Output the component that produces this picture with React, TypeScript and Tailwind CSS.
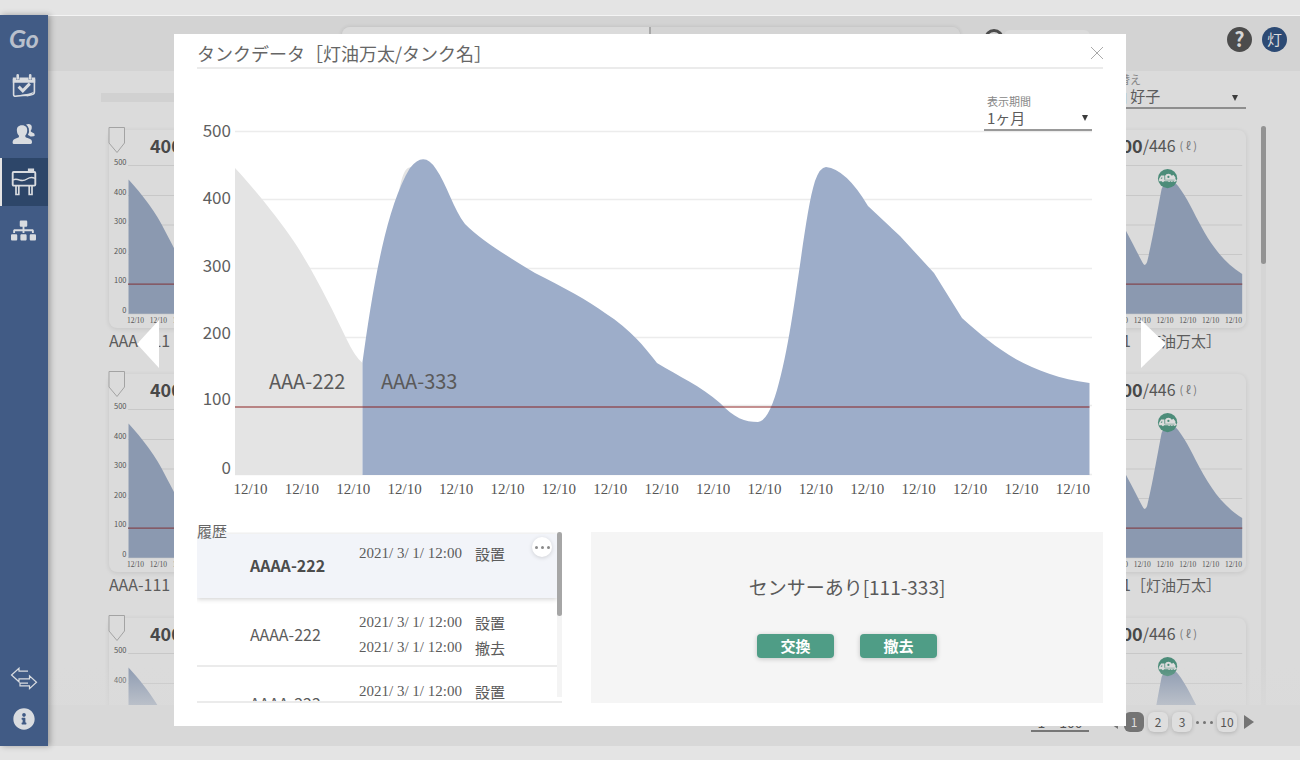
import { useState } from 'react';
import { FaInfoCircle, FaSitemap } from 'react-icons/fa';

const NAV_ITEMS = [
  { id: 'schedule', label: 'スケジュール', icon: CalendarIcon },
  { id: 'customers', label: '顧客', icon: UsersIcon },
  { id: 'tanks', label: 'タンク', icon: TankIcon },
  { id: 'organization', label: '組織', icon: SitemapIcon },
];

const HISTORY = [
  { name: 'AAAA-222', events: [['2021/ 3/ 1/ 12:00', '設置']] },
  {
    name: 'AAAA-222',
    events: [
      ['2021/ 3/ 1/ 12:00', '設置'],
      ['2021/ 3/ 1/ 12:00', '撤去'],
    ],
  },
  {
    name: 'AAAA-222',
    events: [['2021/ 3/ 1/ 12:00', '設置']],
  },
];

const CARD_COUNT = 15;
const CARD_COLUMNS = 5;
const DATE_LABEL = '12/10';

// y position of the grid line and of the label for each level
const CHART_LEVELS = [
  { value: 500, line: 12, text: 18 },
  { value: 400, line: 80, text: 85 },
  { value: 300, line: 149, text: 153 },
  { value: 200, line: 218, text: 220 },
  { value: 100, line: 286, text: 286 },
  { value: 0, line: 355, text: 355 },
];

const CARD_LEVELS = [
  { value: 500, line: 3.5 },
  { value: 400, line: 33.5 },
  { value: 300, line: 63 },
  { value: 200, line: 92.5 },
  { value: 100, line: 122 },
  { value: 0, line: 151.5 },
];

function CalendarIcon() {
  return (
    <svg viewBox="0 0 24 24" className="size-6" fill="none" stroke="currentColor">
      <path d="M1.6 5v15.500q0 1.900 2 1.700l12-1.200M22.400 5v13.200q0 1.500-1.500 2.200-2 1-6 1.200" strokeWidth="1.600" />
      <path d="M14.500 22.300q5-.5 8-5-3 2-9.500 3-4.500.8-10 1.200z" fill="currentColor" stroke="none" />
      <path d="M.8 3.500h3.400v2.200h3.200V3.500h9.200v2.200h3.200V3.500h3.400v5.200H.8z" fill="currentColor" stroke="none" />
      <path d="M5.700 1.300v3.200M18.200 1.300v3.200" strokeWidth="2.600" strokeLinecap="round" />
      <path d="m6.600 12.600 4.200 4.200 7-7.200" strokeWidth="3" />
    </svg>
  );
}

function UsersIcon() {
  return (
    <svg viewBox="0 0 24 24" className="size-6" fill="currentColor">
      <path d="M14 2.500q5-1.600 5.800 2.300.2 3-1.200 4.300.2 1 1.700 1.400 2.600.7 2.500 3-.5 1-4.300.9-1.500-.9-2.600-1.400 1.900-3 .9-6.500-.8-2.700-2.800-4z" />
      <path d="M10 3.300c3.700 0 5.400 2.300 5.200 5.400-.1 2.200-1 3.800-2 5 .1 1.500 1 2 3 2.500 2.900.7 4 2 3.800 4.300-.1 1-1 1.500-2.500 1.500h-15C1.200 22 .6 21.500.6 20.500c0-2.300 1.200-3.600 3.800-4.300 2-.5 2.700-1 2.600-2.500-1.200-1.200-2-2.800-2.100-5C4.700 5.600 6.300 3.300 10 3.300z" />
    </svg>
  );
}

function TankIcon() {
  return (
    <svg viewBox="0 0 26 28" className="h-7 w-[26px]" fill="none" stroke="currentColor">
      <rect x="1.700" y="4" width="22.600" height="13.600" rx="1" strokeWidth="1.900" />
      <path d="M17.500 3.600V1.200h5v2.400" fill="currentColor" strokeWidth="1.200" />
      <path d="M2 11.800q3-1.200 6.500.2 4 1.400 7.500-1 4-2.600 8-.6" strokeWidth="1.400" />
      <path d="M5 18v8.500h2.800V18M18.200 18v8.500H21V18" strokeWidth="1.700" />
    </svg>
  );
}

function SitemapIcon() {
  return <FaSitemap className="size-[25px]" />;
}

function ExchangeIcon() {
  return (
    <svg viewBox="0 0 28 24" className="h-6 w-7" fill="none" stroke="currentColor" strokeWidth="1.200">
      <path d="M18 4.200H9V1.200L1.500 8 9 14.800v-3h10.500V8.800l7 6.400-7 6.500v-2.900H10v-2.600h8" />
    </svg>
  );
}

function TruckBadge() {
  return (
    <g transform="translate(97.500 16.500)">
      <circle r="9.600" fill="#4c8c79" />
      <path
        d="M-8.500 2.800V.2l2-3.200h3.300v4.200h.8V-1Q-3.200-3 -1.200-4.200q2-1 4 0l1.400 1.400 1.600-.9 2 2.400V.8L9 1.600v1.200H8q-.8 1.600-2 0h-.8q-.8 1.600-2 0h-.8q-.8 1.600-2 0h-4q-1 1.800-2.200 0z"
        fill="#dcdcdc"
      />
      <path d="M-7 .2h1.600v-1.900z" fill="#4c8c79" />
      <circle cx=".8" cy="-1.600" r="1.100" fill="#4c8c79" />
      <path d="M-3 1.600h10" stroke="#4c8c79" strokeWidth=".5" />
    </g>
  );
}

function SelectArrow() {
  return (
    <svg viewBox="0 0 6 6" className="pointer-events-none absolute right-1 top-1.5 size-[6px]" fill="#3c3c3c">
      <path d="M0 0h6L3 6z" />
    </svg>
  );
}

function Sidebar() {
  return (
    <nav className="relative z-10 flex w-12 shrink-0 flex-col bg-[#415b85] text-[#d9dce0] shadow-[2px_0_6px_rgba(0,0,0,0.3)]">
      <a
        href="#home"
        className="flex h-[47px] items-center justify-center font-['Lato',sans-serif] text-[25px] font-bold italic text-[#b9c0cc]"
      >
        Go
      </a>
      {NAV_ITEMS.map(({ id, label, icon: Icon }) => (
        <a
          key={id}
          href={`#${id}`}
          aria-label={label}
          className={`flex h-12 items-center justify-center border-l-2 pr-[3px] ${
            id === 'tanks' ? 'border-[#e4e4e4] bg-[#2d4669]' : 'border-transparent'
          }`}
        >
          <Icon />
        </a>
      ))}
      <div className="mt-auto flex flex-col items-center gap-[17px] pb-4">
        <button type="button" aria-label="切り替え">
          <ExchangeIcon />
        </button>
        <button type="button" aria-label="情報">
          <FaInfoCircle className="size-[22px]" />
        </button>
      </div>
    </nav>
  );
}

function Header() {
  return (
    <header className="flex h-[55px] shrink-0 items-center bg-[#d3d3d3] pb-[9px] pl-[294px] pr-[13px]">
      <div className="flex h-6 w-[618px] overflow-hidden rounded-lg shadow-[0_0_4px_rgba(0,0,0,0.12)]">
        <input aria-label="検索" className="w-1/2 border-r-2 border-[#a8a8a8] bg-[#dbdbdb] px-3" />
        <input aria-label="住所検索" className="w-1/2 bg-[#d4d4d4] px-3" />
      </div>
      <span className="ml-[24px] size-5 rounded-full border-[3px] border-[#4c4c4c]" />
      <span className="h-[18px] w-[86px] rounded-md bg-[#dbdbdb]" />
      <button
        type="button"
        aria-label="ヘルプ"
        className="ml-auto size-[25px] rounded-full bg-[#4c4c4c] text-center text-xl font-bold leading-6 text-[#d6d6d6]"
      >
        ?
      </button>
      <button
        type="button"
        className="ml-[10px] size-[25px] rounded-full bg-[#2c4a74] text-center text-[15px] leading-6 text-[#dcdcdc]"
      >
        灯
      </button>
    </header>
  );
}

function TankCard({ covered }: { covered: boolean }) {
  return (
    <article className={covered ? 'invisible' : ''}>
      <div className="relative rounded-lg bg-[#dbdbdb] shadow-[0_1px_5px_rgba(0,0,0,0.1)]">
        <svg viewBox="0 0 18 28" className="absolute -left-px -top-1 h-7 w-[18px]" fill="none" stroke="#a3a3a3">
          <path d="M1 1.500h15.500V17L9 26.500 1 17z" fill="#dbdbdb" />
        </svg>
        <p className="flex h-8 items-center pb-[2px] pl-[41px] text-[#484848]">
          <b className="text-lg">400</b>
          <span className="text-base text-[#555]">/446</span>
          <span className="ml-1 text-[11px] text-[#777]">( ℓ )</span>
        </p>
        <svg viewBox="0 0 176 166" className="block w-full overflow-visible">
          {CARD_LEVELS.map(({ value, line }) => (
            <g key={value}>
              <line x1="19" x2="172" y1={line} y2={line} stroke="#c8c8c8" />
              <text x="17.500" y={line - 1} textAnchor="end" fontSize="7.500" fill="#555">
                {value}
              </text>
            </g>
          ))}
          <path
            d="M19.500 151.500V17.500C33 32 48 52 56 69C63 82 70 96 73 101.500Q75 105 77 100C82 80 88 45 91.500 27Q95 17 102 18C110 24 118 39 126 55C138 78 150 98 172 112V151.500z"
            fill="#8b99b0"
          />
          <line x1="19" x2="172" y1="122" y2="122" stroke="#82474f" strokeWidth="1.300" />
          <TruckBadge />
          {Array.from({ length: 7 }, (_, i) => (
            <text
              key={i}
              x={26.5 + i * 22.8}
              y="160.500"
              textAnchor="middle"
              fontSize="7.500"
              fill="#555"
              className="font-['Liberation_Serif',serif]"
            >
              {DATE_LABEL}
            </text>
          ))}
        </svg>
      </div>
      <h3 className="whitespace-nowrap text-base leading-6 text-[#5c5c5c]">
        AAA-111<span className="text-[15px]">［灯油万太］</span>
      </h3>
    </article>
  );
}

function Pager() {
  const pageClass =
    'h-5 w-5 rounded-md bg-[#dedede] text-xs text-[#555] shadow-[0_1px_4px_rgba(0,0,0,0.18)]';
  return (
    <footer className="flex h-[41px] shrink-0 items-start justify-end bg-[#d8d8d8] pr-[46px] pt-[7px] text-[#555]">
      <select
        aria-label="表示件数"
        className="mr-[19px] h-[20px] w-[58px] appearance-none border-b-2 border-[#777] text-center text-sm"
      >
        <option>1 − 100</option>
      </select>
      <button type="button" aria-label="前へ" className="mr-[6px] h-5">
        <svg viewBox="0 0 10 14" className="h-[14px] w-[10px]" fill="#747474">
          <path d="M10 0v14L0 7z" />
        </svg>
      </button>
      <div className="flex h-5 items-center gap-1">
        <button type="button" className="h-5 w-5 rounded-md bg-[#747474] text-xs text-[#dedede]">
          1
        </button>
        <button type="button" className={pageClass}>2</button>
        <button type="button" className={pageClass}>3</button>
        <span className="flex w-[17px] justify-between">
          {[0, 1, 2].map((i) => (
            <i key={i} className="size-[3px] rounded-full bg-[#747474]" />
          ))}
        </span>
        <button type="button" className={pageClass}>10</button>
      </div>
      <button type="button" aria-label="次へ" className="ml-[7px] h-5">
        <svg viewBox="0 0 10 14" className="h-[14px] w-[10px]" fill="#747474">
          <path d="M0 0v14l10-7z" />
        </svg>
      </button>
    </footer>
  );
}

function TankList({ dialogOpen }: { dialogOpen: boolean }) {
  return (
    <main className="flex min-w-0 flex-1 flex-col border-t border-[#f4f4f4] bg-[#dbdbdb]">
      <Header />
      <div className="flex h-[55px] shrink-0 items-start justify-between pl-[53px] pr-[54px]">
        <div className="mt-[22px] h-[9px] w-[300px] bg-[#d1d1d1]" />
        <div className="relative mt-[2px] w-[153px]">
          <label htmlFor="staff" className="block pl-1 text-[11px] leading-3 text-[#888]">
            並び替え
          </label>
          <select
            id="staff"
            className="block h-6 w-full appearance-none border-b-2 border-[#8e8e8e] pb-px pl-1 text-[15px] leading-5 text-[#5c5c5c]"
          >
            <option>灯油 好子</option>
          </select>
          <div className="absolute bottom-0 right-1 h-5">
            <SelectArrow />
          </div>
        </div>
      </div>
      <div className="relative flex min-h-0 flex-1 overflow-hidden pl-[61px] pr-[34px]">
        <div className="grid flex-1 grid-cols-5 content-start gap-x-16 gap-y-[21px] pt-1">
          {Array.from({ length: CARD_COUNT }, (_, i) => {
            const column = i % CARD_COLUMNS;
            return <TankCard key={i} covered={dialogOpen && column > 0 && column < CARD_COLUMNS - 1} />;
          })}
        </div>
        <div className="ml-[15px] w-[5px] bg-[#d5d5d5]">
          <div className="h-[138px] rounded-full bg-[#939393]" />
        </div>
        <div className="pointer-events-none absolute inset-x-0 bottom-0 h-10 bg-linear-to-b from-[#dadada]/0 to-[#dadada]/60" />
      </div>
      <Pager />
    </main>
  );
}

function TankChart() {
  return (
    <svg viewBox="0 0 906 381" className="-mt-3 block w-full" role="img" aria-label="タンク残量">
      {CHART_LEVELS.map(({ value, line, text }) => (
        <g key={value}>
          <line x1="38" x2="895" y1={line + 0.5} y2={line + 0.5} stroke="#ececec" strokeWidth="1.500" />
          <text x="34" y={text} textAnchor="end" fontSize="17" fill="#5f5f5f">
            {value}
          </text>
        </g>
      ))}
      {/* previous sensor */}
      <path
        d="M38 356V49C57 69 92 112 106 137C123 165 138 196 149 219Q158 238 165.500 244V356zM202 72Q206 50 212 48.500L220 48z"
        fill="#e4e4e4"
      />
      {/* current sensor */}
      <path
        d="M165.500 356V243C175 175 188 90 213 49Q227 31 239 50C249 64 257 91 268 105C284 121 310 137 338 154C366 168 392 182 408 194C430 208 445 224 460 244C481 257 504 267 523 284C537 299 548 303 561 303Q571 302 580 271C598 210 606 100 618 62Q623 48 629 48Q649 50 671 87L703 117L737 154L765 199C799 230 833 256 892.500 264V356z"
        fill="#9dadc9"
      />
      <line x1="38" x2="892.500" y1="288" y2="288" stroke="#8b2020" strokeOpacity=".65" strokeWidth="1.600" />
      <g fontSize="20" fill="#5a5a5a">
        <text x="72" y="270">AAA-222</text>
        <text x="184" y="270">AAA-333</text>
      </g>
      {Array.from({ length: 17 }, (_, i) => (
        <text
          key={i}
          x={53.5 + i * 51.4}
          y="375"
          textAnchor="middle"
          fontSize="15"
          fill="#555"
          className="font-['Liberation_Serif',serif]"
        >
          {DATE_LABEL}
        </text>
      ))}
    </svg>
  );
}

function HistoryList() {
  return (
    <div className="flex h-[171px] overflow-hidden border-b-2 border-[#ebebeb]">
      <ul className="min-w-0 flex-1 pt-[2px]">
        {HISTORY.map(({ name, events }, i) => {
          const current = i === 0;
          return (
            <li
              key={i}
              className={`relative flex border-b-2 pl-[53px] ${
                current
                  ? 'h-16 border-transparent bg-[#f2f4f9] pt-[7px] shadow-[0_1px_5px_rgba(0,0,0,0.2)]'
                  : 'h-[69px] border-[#ebebeb] pt-3'
              }`}
            >
              <span
                className={`w-[109px] text-base leading-[48px] ${
                  current ? 'font-bold text-[#4c4c4c]' : 'text-[#5c5c5c]'
                }`}
              >
                {name}
              </span>
              <div>
                {events.map(([date, action]) => (
                  <p key={action} className="flex text-[15px] leading-[25px] text-[#5c5c5c]">
                    <span className="w-[116px] font-['Liberation_Serif',serif]">{date}</span>
                    {action}
                  </p>
                ))}
              </div>
              {current && (
                <button
                  type="button"
                  aria-label="メニュー"
                  className="absolute right-[5px] top-[3px] flex size-5 items-center justify-center gap-[3px] rounded-full bg-white shadow-[0_1px_4px_rgba(0,0,0,0.15)]"
                >
                  {[0, 1, 2].map((dot) => (
                    <i key={dot} className="size-[3px] rounded-full bg-[#8a8a8a]" />
                  ))}
                </button>
              )}
            </li>
          );
        })}
      </ul>
      <div className="relative h-[165px] w-[5px] bg-[#f4f4f4]">
        <div className="h-[84px] rounded-full bg-[#a6a6a6]" />
      </div>
    </div>
  );
}

function TankDialog({ onClose }: { onClose: () => void }) {
  const actionClass =
    'h-6 w-[77px] rounded bg-[#4f9d86] pb-px text-[15px] font-bold leading-5 text-white shadow-[0_1px_5px_rgba(0,0,0,0.2)]';
  return (
    <div className="fixed inset-0 z-20 flex items-center px-[174px]">
      <div role="dialog" aria-labelledby="dialog-title" className="relative w-full bg-white px-[23px] pb-[23px]">
        <div className="flex h-[35px] items-center justify-between border-b-2 border-[#ebebeb] pt-1">
          <h2 id="dialog-title" className="text-lg text-[#666]">
            タンクデータ［灯油万太/タンク名］
          </h2>
          <button type="button" aria-label="閉じる" onClick={onClose}>
            <svg viewBox="0 0 12 12" className="size-3" fill="none" stroke="#aaa">
              <path d="m0 0 12 12M12 0 0 12" />
            </svg>
          </button>
        </div>

        <div className="flex justify-end pr-[11px] pt-[26px]">
          <div className="relative w-[108px]">
            <label htmlFor="period" className="block pl-[3px] text-[11px] leading-3 text-[#888]">
              表示期間
            </label>
            <select
              id="period"
              className="block h-6 w-full appearance-none border-b-2 border-[#999] pb-px pl-[3px] text-[15px] leading-5 text-[#5c5c5c]"
            >
              <option>1ヶ月</option>
            </select>
            <div className="absolute bottom-0 right-0 h-[22px]">
              <SelectArrow />
            </div>
          </div>
        </div>

        <TankChart />

        <div className="mt-[19px] grid grid-cols-[365fr_512fr] gap-x-[29px]">
          <h3 className="relative z-10 col-span-2 -mb-[11px] text-[15px] leading-6 text-[#666]">履歴</h3>
          <HistoryList />
          <div className="flex flex-col items-center bg-[#f5f5f5] pt-[41px]">
            <p className="text-[19px] leading-7 text-[#5a5a5a]">センサーあり[111-333]</p>
            <div className="mt-[33px] flex gap-[26px]">
              <button type="button" className={actionClass}>交換</button>
              <button type="button" className={actionClass}>撤去</button>
            </div>
          </div>
        </div>

        <button type="button" aria-label="前のタンク" className="absolute -left-[37px] top-[286px]">
          <svg viewBox="0 0 22 48" className="h-12 w-[22px]" fill="#fff">
            <path d="M22 0v48L0 24z" />
          </svg>
        </button>
        <button type="button" aria-label="次のタンク" className="absolute -right-[40px] top-[286px]">
          <svg viewBox="0 0 25 48" className="h-12 w-[25px]" fill="#fff">
            <path d="M0 0v48l25-24z" />
          </svg>
        </button>
      </div>
    </div>
  );
}

export default function App() {
  const [open, setOpen] = useState(true);

  return (
    <div className="flex h-screen overflow-hidden bg-[#e4e4e4] pb-[14px] pt-[15px] font-['Noto_Sans_CJK_JP',sans-serif]">
      <Sidebar />
      <TankList dialogOpen={open} />
      {open && <TankDialog onClose={() => setOpen(false)} />}
    </div>
  );
}
